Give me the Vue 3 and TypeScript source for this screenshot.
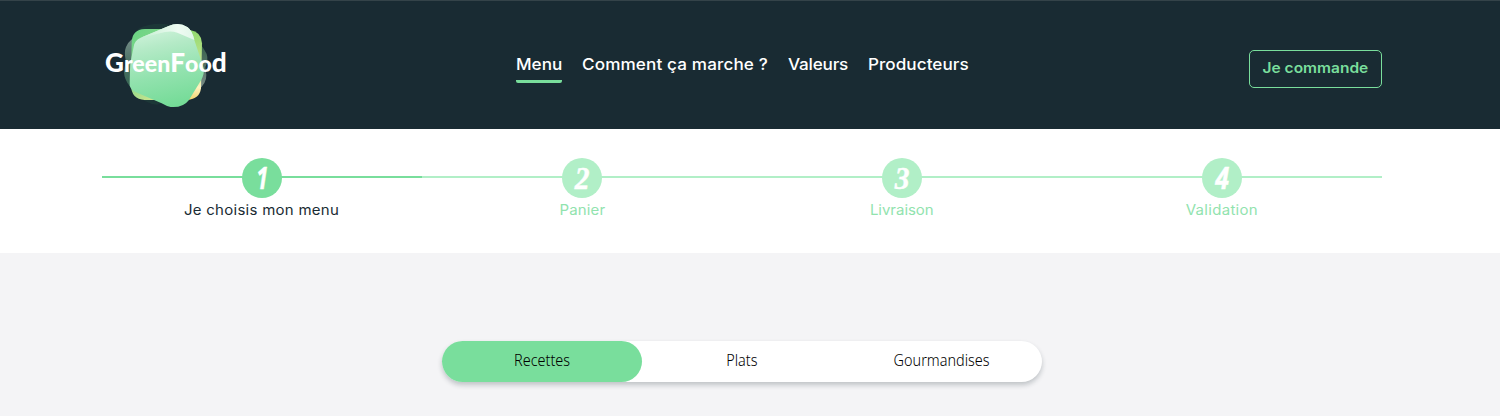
<script setup lang="ts">
interface NavItem {
  label: string
  key: string
  active?: boolean
}

const nav: NavItem[] = [
  { label: 'Menu', key: 'menu', active: true },
  { label: 'Comment ça marche ?', key: 'how' },
  { label: 'Valeurs', key: 'values' },
  { label: 'Producteurs', key: 'producers' },
]

const steps: NavItem[] = [
  { label: 'Je choisis mon menu', key: 'choose', active: true },
  { label: 'Panier', key: 'cart' },
  { label: 'Livraison', key: 'delivery' },
  { label: 'Validation', key: 'confirm' },
]

const tabs: NavItem[] = [
  { label: 'Recettes', key: 'recipes', active: true },
  { label: 'Plats', key: 'dishes' },
  { label: 'Gourmandises', key: 'treats' },
]
</script>

<template>
  <div class="page">
    <header class="header">
      <svg class="logo" viewBox="0 0 450 330" role="img" aria-label="GreenFood">
        <defs>
          <linearGradient id="front" x1="0.4" y1="0" x2="0.6" y2="1">
            <stop offset="0" stop-color="#d3f4de" />
            <stop offset="0.25" stop-color="#b5eac7" />
            <stop offset="0.6" stop-color="#92e2ae" />
            <stop offset="1" stop-color="#73db96" />
          </linearGradient>
          <linearGradient id="square" x1="0" y1="0" x2="0.6" y2="1">
            <stop offset="0" stop-color="#68d384" />
            <stop offset="0.55" stop-color="#8bd98a" />
            <stop offset="1" stop-color="#d2e58f" />
          </linearGradient>
          <linearGradient id="corner" x1="0" y1="0" x2="0" y2="1">
            <stop offset="0" stop-color="#91d96e" />
            <stop offset="0.65" stop-color="#d7e99b" />
            <stop offset="0.82" stop-color="#fff2bf" />
            <stop offset="1" stop-color="#f3d56c" />
          </linearGradient>
          <linearGradient id="shade" x1="0" y1="0" x2="0" y2="1">
            <stop offset="0" stop-color="#7e918f" />
            <stop offset="0.45" stop-color="#4e7467" />
            <stop offset="1" stop-color="#32624f" />
          </linearGradient>
          <linearGradient id="shadeRight" x1="0" y1="0" x2="0" y2="1">
            <stop offset="0" stop-color="#2c5943" />
            <stop offset="0.55" stop-color="#587568" />
            <stop offset="1" stop-color="#83918f" />
          </linearGradient>
          <linearGradient id="fold" x1="0" y1="0" x2="1" y2="0">
            <stop offset="0" stop-color="#c4efd1" />
            <stop offset="0.7" stop-color="#effbf3" />
            <stop offset="1" stop-color="#e0f7e8" />
          </linearGradient>
        </defs>
        <path d="M145 56Q190 34 238 44L210 100L130 80Z" fill="#1c3737" />
        <path d="M130 245Q165 282 201 284L235 270Z" fill="#1c3737" />
        <path d="M160 70Q120 83 108 111Q102 125 107 151L102 187Q103 209 119 228L160 250Z" fill="url(#shade)" />
        <path d="M310 80Q334 100 350 132Q356 151 346 171L349 195Q350 222 322 242L290 250Z" fill="url(#shadeRight)" />
        <path d="M165 57H238L250 270H164Q124 268 123 226L125 100Q125 58 165 57Z" fill="url(#square)" />
        <path d="M260 60H300Q334 65 336 100L333 235Q329 267 292 270H240Z" fill="url(#corner)" />
        <path d="M131 110Q134 90 152 83L236 48Q266 34 293 52Q306 61 313 90L341 174Q344 191 334 209L297 270Q279 294 242 291Q228 288 215 280L136 246Q117 236 119 218L120 181Q120 159 124 145Z" fill="url(#front)" />
        <path d="M152 83L236 48Q266 34 293 52Q306 61 313 90L262 68Q245 62 225 66Z" fill="url(#fold)" />
        <text x="45" y="185" textLength="365" lengthAdjust="spacingAndGlyphs">G<tspan class="small">reen</tspan>F<tspan class="small">oo</tspan>d</text>
      </svg>
      <nav class="nav">
        <a v-for="n in nav" :key="n.key" :class="['nav-item', n.key, { active: n.active }]"><span class="fit">{{ n.label }}</span></a>
      </nav>
      <button class="order" type="button"><span class="fit">Je commande</span></button>
    </header>

    <section class="steps">
      <div v-for="(s, i) in steps" :key="s.key" :class="['step', s.key, { active: s.active }]">
        <div class="rail"><span class="dot"><span :class="['digit', 'digit-' + (i + 1)]">{{ i + 1 }}</span></span></div>
        <span class="label">{{ s.label }}</span>
      </div>
    </section>

    <main class="content">
      <div class="tabs">
        <div v-for="t in tabs" :key="t.key" :class="['tab', { active: t.active }]"><span class="fit">{{ t.label }}</span></div>
      </div>
    </main>
  </div>
</template>

<style>
body {
  margin: 0;
}
</style>

<style scoped>
.page {
  width: 1500px;
  height: 416px;
  overflow: hidden;
  background: #f4f4f6;
  font-family: Inter, "Liberation Sans", sans-serif;
}
.fit {
  display: inline-block;
}
.header {
  display: flex;
  align-items: flex-start;
  box-sizing: border-box;
  height: 129px;
  padding: 9px 118px 0 90px;
  border-top: 1px solid #344349;
  background: #192b33;
}
.logo {
  width: 150px;
  height: 110px;
}
.logo text {
  fill: #fff;
  font-family: Lato, sans-serif;
  font-size: 78px;
  font-weight: 900;
}
.logo .small {
  font-size: 69px;
}
.nav {
  display: flex;
  gap: 20px;
  margin: 42px 0 0 276px;
}
.nav-item {
  height: 28px;
  color: #fff;
  font-size: 16px;
  font-weight: 500;
  line-height: 24px;
  white-space: nowrap;
}
.nav-item .fit {
  transform: scaleX(1.07);
  transform-origin: left;
}
.nav-item.active {
  border-bottom: 3px solid #79de9c;
  border-radius: 2px;
}
.nav-item.menu { width: 46px; }
.nav-item.how { width: 186px; letter-spacing: 0.12px; }
.nav-item.values { width: 60px; letter-spacing: -0.18px; }
.nav-item.producers { width: 101px; letter-spacing: 0.04px; }
.order {
  box-sizing: border-box;
  width: 133px;
  height: 38px;
  margin: 40px 0 0 auto;
  padding: 0 0 4px;
  border: 1px solid #79de9c;
  border-radius: 5px;
  background: transparent;
  color: #79de9c;
  font: 600 14.5px Inter, sans-serif;
  white-space: nowrap;
}
.order .fit {
  transform: scaleX(1.07);
}
.steps {
  display: grid;
  grid-template-columns: repeat(4, 320px);
  box-sizing: border-box;
  height: 124px;
  padding: 29px 118px 0 102px;
  background: #fff;
}
.step {
  --tone: #b1efc7;
  display: flex;
  flex-direction: column;
  align-items: center;
  color: #91e3ae;
}
.step.active {
  --tone: #79de9c;
  color: #192b33;
}
.rail {
  display: flex;
  justify-content: center;
  width: 320px;
  height: 40px;
  background: linear-gradient(var(--tone), var(--tone)) 0 18px / 100% 2px no-repeat;
}
.dot {
  width: 40px;
  height: 40px;
  border-radius: 50%;
  background: var(--tone);
  color: #fff;
  font: italic 700 32px/41px "Liberation Serif", serif;
  text-align: center;
}
.digit {
  display: inline-block;
  -webkit-text-stroke: 0.5px #fff;
  transform: scaleX(0.92);
}
.digit-1 {
  font-family: "Open Sans", sans-serif;
  font-size: 30px;
  line-height: 40px;
  transform: scaleX(0.72);
}
.digit-4 {
  font-family: "Open Sans", sans-serif;
  font-size: 30px;
  line-height: 40px;
  transform: scaleX(0.84);
}
.label {
  font-size: 14px;
  line-height: 24px;
  white-space: nowrap;
  transform: scaleX(1.07);
}
.choose .label { letter-spacing: 0.26px; }
.cart .label { letter-spacing: 0.15px; }
.delivery .label { letter-spacing: -0.02px; }
.confirm .label { letter-spacing: 0.3px; }
.content {
  display: flex;
  justify-content: center;
  padding: 88px 16px 0 0;
}
.tabs {
  display: flex;
  width: 600px;
  height: 41px;
  border-radius: 21px;
  background: #fff;
  box-shadow: 0 3px 5px rgba(25, 43, 51, 0.24);
}
.tab {
  width: 200px;
  border-radius: 21px;
  color: #000;
  font: 300 15.5px/38px "Noto Sans", sans-serif;
  text-align: center;
}
.tab .fit {
  transform: scaleX(0.93);
}
.tab.active {
  background: #79de9c;
}
</style>
